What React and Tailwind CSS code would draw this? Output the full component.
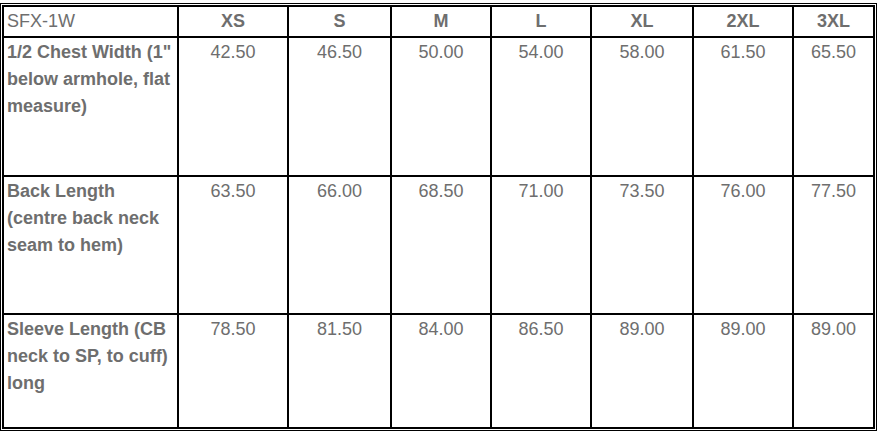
import React from "react";

const sizes = ["XS", "S", "M", "L", "XL", "2XL", "3XL"];

const rows = [
  {
    label: '1/2 Chest Width (1" below armhole, flat measure)',
    values: ["42.50", "46.50", "50.00", "54.00", "58.00", "61.50", "65.50"],
    height: "h-[139px]",
  },
  {
    label: "Back Length (centre back neck seam to hem)",
    values: ["63.50", "66.00", "68.50", "71.00", "73.50", "76.00", "77.50"],
    height: "h-[138px]",
  },
  {
    label: "Sleeve Length (CB neck to SP, to cuff) long",
    values: ["78.50", "81.50", "84.00", "86.50", "89.00", "89.00", "89.00"],
    height: "h-[114px]",
  },
];

const App = () => {
  return (
    <div className="bg-white w-[879px] h-[436px] pt-[3px] font-['Liberation_Sans',Arial,sans-serif] text-[18px] text-[#6e6e6e]">
      <div className="w-[877px] border border-black p-px">
        <table className="w-full table-fixed border-collapse">
          <colgroup>
            <col className="w-[175px]" />
            <col className="w-[110px]" />
            <col className="w-[103px]" />
            <col className="w-[100px]" />
            <col className="w-[100px]" />
            <col className="w-[102px]" />
            <col className="w-[100px]" />
            <col />
          </colgroup>
          <thead>
            <tr className="h-[31px]">
              <td className="border-2 border-black px-[3px] align-middle leading-[27px]">
                SFX-1W
              </td>
              {sizes.map((s) => (
                <td
                  key={s}
                  className="border-2 border-black text-center font-bold align-middle leading-[27px]"
                >
                  {s}
                </td>
              ))}
            </tr>
          </thead>
          <tbody>
            {rows.map((row) => (
              <tr key={row.label} className={row.height}>
                <td className="border-2 border-black align-top pl-[3px] pr-[2px] pt-[1px] font-bold leading-[27px]">
                  {row.label}
                </td>
                {row.values.map((v, i) => (
                  <td
                    key={i}
                    className="border-2 border-black align-top text-center pt-[1px] leading-[27px]"
                  >
                    {v}
                  </td>
                ))}
              </tr>
            ))}
          </tbody>
        </table>
      </div>
    </div>
  );
};

export default App;
